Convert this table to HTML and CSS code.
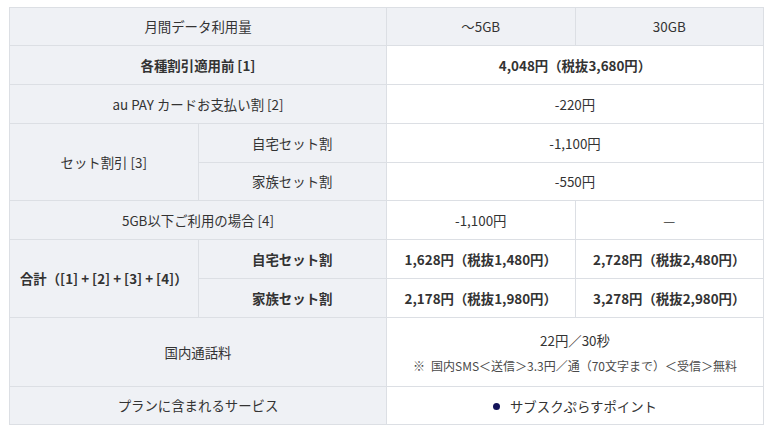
FILE: index.html
```html
<!DOCTYPE html>
<html lang="ja">
<head>
<meta charset="utf-8">
<title>料金表</title>
<link rel="stylesheet" href="styles.css">
</head>
<body>
<table class="price">
  <colgroup><col class="c"><col class="c"><col class="c"><col class="c"></colgroup>
  <tr class="r">
    <th colspan="2" class="hd">月間データ利用量</th>
    <th class="hd">〜5GB</th>
    <th class="hd">30GB</th>
  </tr>
  <tr class="r r39">
    <th colspan="2" class="hd b">各種割引適用前 [1]</th>
    <td colspan="2" class="b">4,048円（税抜3,680円）</td>
  </tr>
  <tr class="r r39">
    <th colspan="2" class="hd">au PAY カードお支払い割 [2]</th>
    <td colspan="2">-220円</td>
  </tr>
  <tr class="r r39">
    <th rowspan="2" class="hd">セット割引 [3]</th>
    <th class="hd">自宅セット割</th>
    <td colspan="2">-1,100円</td>
  </tr>
  <tr class="r">
    <th class="hd">家族セット割</th>
    <td colspan="2">-550円</td>
  </tr>
  <tr class="r r39">
    <th colspan="2" class="hd">5GB以下ご利用の場合 [4]</th>
    <td>-1,100円</td>
    <td>—</td>
  </tr>
  <tr class="r r39">
    <th rowspan="2" class="hd b">合計（[1] + [2] + [3] + [4]）</th>
    <th class="hd b">自宅セット割</th>
    <td class="b">1,628円（税抜1,480円）</td>
    <td class="b">2,728円（税抜2,480円）</td>
  </tr>
  <tr class="r r39">
    <th class="hd b">家族セット割</th>
    <td class="b">2,178円（税抜1,980円）</td>
    <td class="b">3,278円（税抜2,980円）</td>
  </tr>
  <tr class="r tall">
    <th colspan="2" class="hd">国内通話料</th>
    <td colspan="2" class="call">
      <div class="call-main">22円／30秒</div>
      <div class="note">※&ensp;国内SMS＜送信＞3.3円／通（70文字まで）＜受信＞無料</div>
    </td>
  </tr>
  <tr class="r">
    <th colspan="2" class="hd">プランに含まれるサービス</th>
    <td colspan="2"><span class="svc"><span class="dot"></span>サブスクぷらすポイント</span></td>
  </tr>
</table>
</body>
</html>
```
FILE: styles.css
```css
html, body {
  margin: 0;
  padding: 0;
  background: #ffffff;
}
body {
  font-family: "Noto Sans CJK JP", "Noto Sans", sans-serif;
  color: #333333;
  font-size: 13.4px;
}
.price {
  border-collapse: collapse;
  table-layout: fixed;
  width: 755px;
  margin: 7px 0 0 9px;
}
.c {
  width: 25%;
}
.price th,
.price td {
  border: 1px solid #dcdfe4;
  text-align: center;
  vertical-align: middle;
  padding: 0 6px;
  font-weight: 400;
  line-height: 1.4;
}
.hd {
  background: #eff1f5;
}
.b {
  font-weight: 700 !important;
}
.r {
  height: 38px;
}
.r39 {
  height: 39px;
}
.tall {
  height: 69px;
}
.call {
  padding-top: 2px !important;
}
.call-main {
  margin-bottom: 9px;
}
.note {
  font-size: 12px;
  color: #4a4a4a;
}
.svc {
  display: inline-flex;
  align-items: center;
  gap: 10px;
}
.dot {
  width: 7px;
  height: 7px;
  border-radius: 50%;
  background: #14145a;
}
```
